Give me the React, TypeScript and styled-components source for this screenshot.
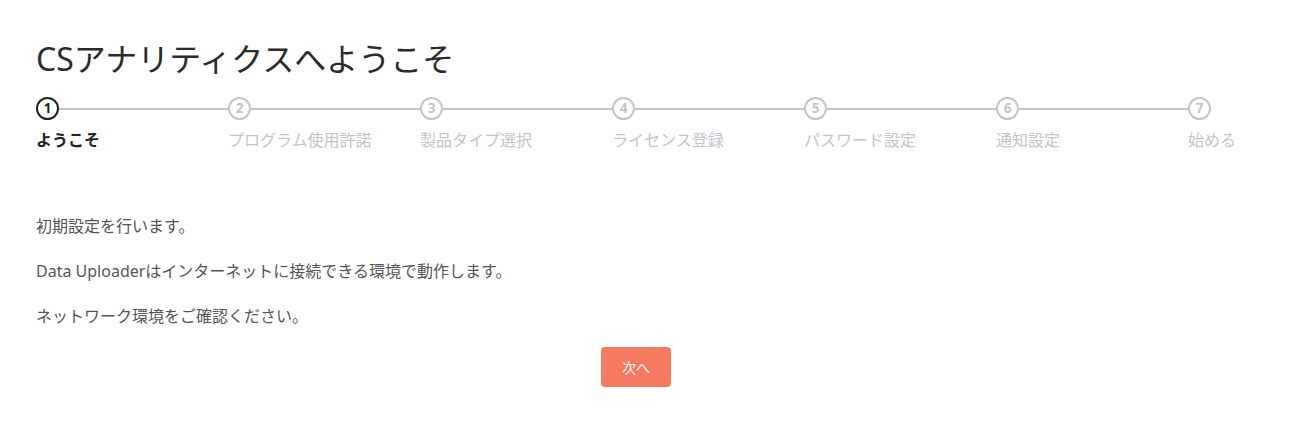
import React from "react";
import styled, { createGlobalStyle } from "styled-components";

const Global = createGlobalStyle`
  html, body { margin: 0; padding: 0; background: #ffffff; }
  body { font-family: "Noto Sans", "Noto Sans CJK JP", sans-serif; }
`;

const Page = styled.main`
  width: 1200px;
  padding: 38px 0 0 36px;
`;

const Title = styled.h1`
  margin: 0;
  font-size: 32px;
  line-height: 41px;
  font-weight: 400;
  color: #2b2b2b;
  letter-spacing: 0;
`;

const Steps = styled.ol`
  list-style: none;
  margin: 18px 0 0 0;
  padding: 0;
  display: grid;
  grid-template-columns: repeat(6, 192px) 48px;
`;

const Step = styled.li`
  display: flex;
  flex-direction: column;
  align-items: flex-start;
`;

const Track = styled.div`
  display: flex;
  align-items: center;
  width: 100%;
  height: 23px;
`;

const Circle = styled.span<{ $active?: boolean }>`
  box-sizing: border-box;
  flex: none;
  width: 23px;
  height: 23px;
  border-radius: 50%;
  border: 2px solid ${(p) => (p.$active ? "#222222" : "#c4c5cd")};
  color: ${(p) => (p.$active ? "#222222" : "#c4c5cd")};
  font-size: 13.5px;
  font-weight: 700;
  display: flex;
  align-items: center;
  justify-content: center;
  line-height: 1;
  font-family: "Open Sans", "Noto Sans", sans-serif;
`;

const Line = styled.span`
  flex: 1;
  height: 2px;
  background: #c4c5cd;
`;

const Label = styled.span<{ $active?: boolean }>`
  margin-top: 8px;
  font-size: 16px;
  line-height: 24px;
  white-space: nowrap;
  font-weight: ${(p) => (p.$active ? 700 : 400)};
  color: ${(p) => (p.$active ? "#222222" : "#c3c4cb")};
`;

const Body = styled.section`
  margin-top: 62px;
  display: flex;
  flex-direction: column;
  gap: 21px;
`;

const Text = styled.p`
  margin: 0;
  font-size: 16px;
  line-height: 24px;
  color: #555555;
`;

const Actions = styled.div`
  display: flex;
  justify-content: center;
  margin-top: 19px;
`;

const NextButton = styled.button`
  width: 70px;
  height: 40px;
  border: none;
  border-radius: 4px;
  background: #f57a61;
  color: #ffffff;
  font-family: "Noto Sans", "Noto Sans CJK JP", sans-serif;
  font-size: 14px;
  cursor: pointer;
`;

const steps = [
  "ようこそ",
  "プログラム使用許諾",
  "製品タイプ選択",
  "ライセンス登録",
  "パスワード設定",
  "通知設定",
  "始める",
];

export default function App() {
  return (
    <>
      <Global />
      <Page>
        <Title>CSアナリティクスへようこそ</Title>
        <Steps>
          {steps.map((s, i) => (
            <Step key={s}>
              <Track>
                <Circle $active={i === 0}>{i + 1}</Circle>
                {i < steps.length - 1 && <Line />}
              </Track>
              <Label $active={i === 0}>{s}</Label>
            </Step>
          ))}
        </Steps>
        <Body>
          <Text>初期設定を行います。</Text>
          <Text>Data Uploaderはインターネットに接続できる環境で動作します。</Text>
          <Text>ネットワーク環境をご確認ください。</Text>
        </Body>
        <Actions>
          <NextButton>次へ</NextButton>
        </Actions>
      </Page>
    </>
  );
}
